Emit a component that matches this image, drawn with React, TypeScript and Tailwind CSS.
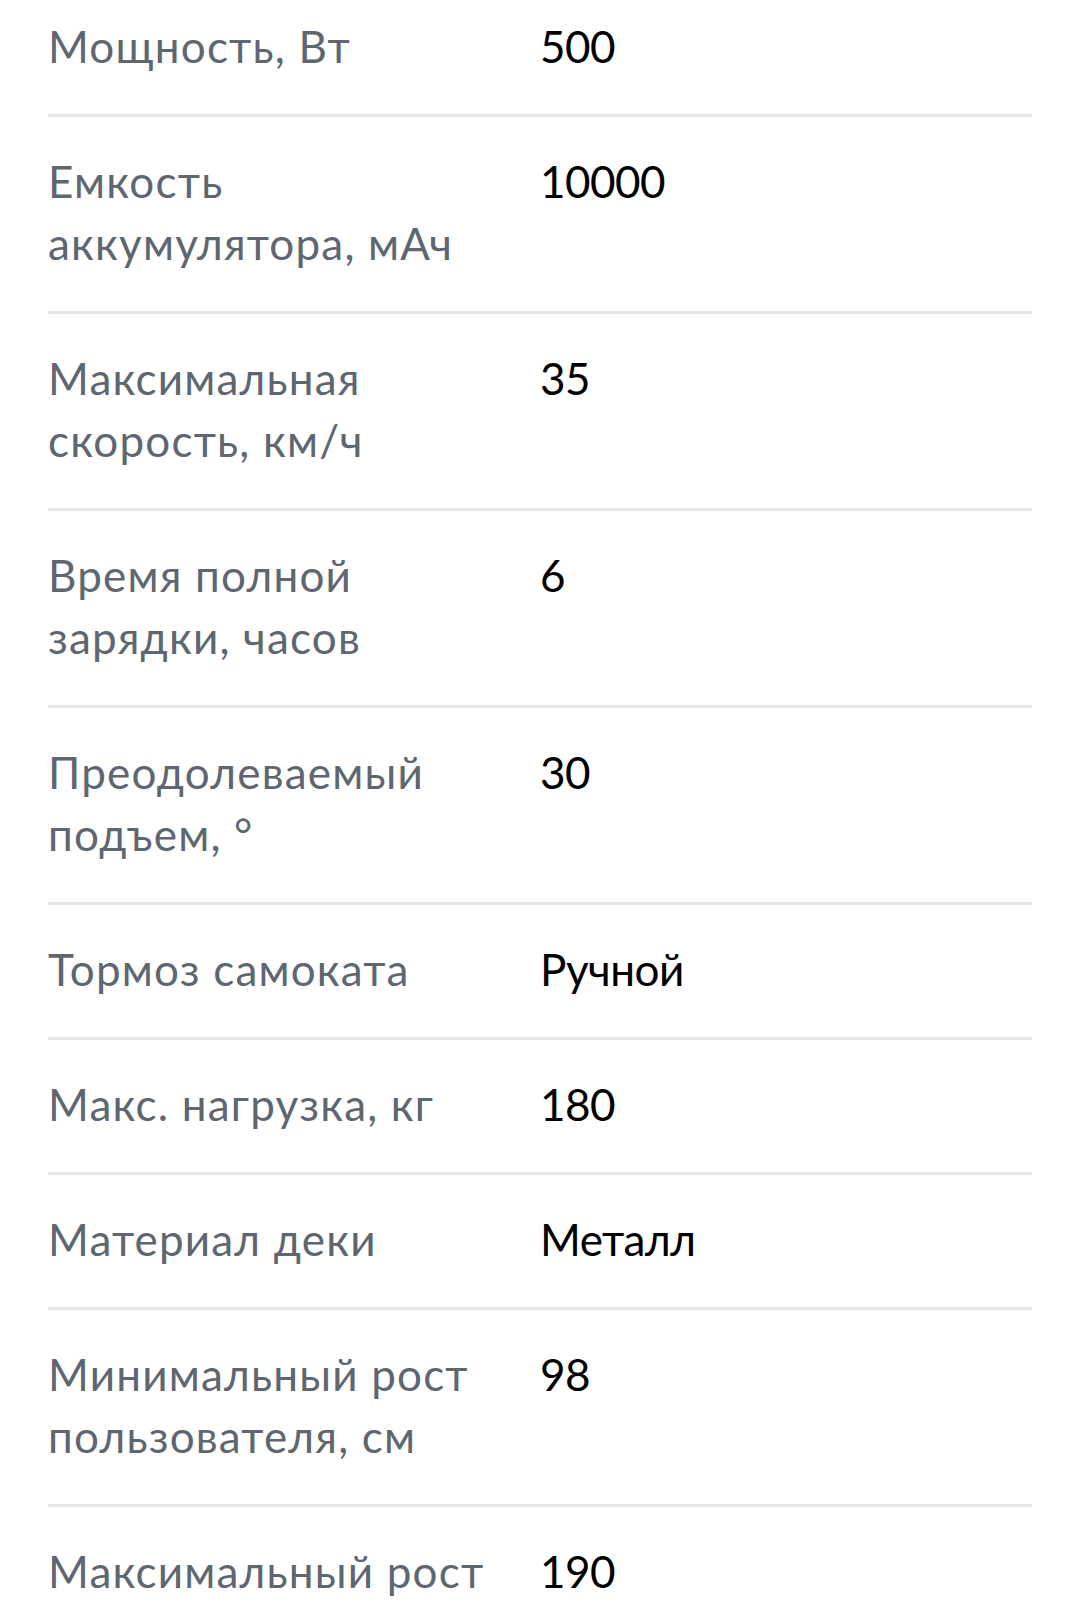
const specs: { label: string[]; value: string }[] = [
  { label: ["Мощность, Вт"], value: "500" },
  { label: ["Емкость", "аккумулятора, мАч"], value: "10000" },
  { label: ["Максимальная", "скорость, км/ч"], value: "35" },
  { label: ["Время полной", "зарядки, часов"], value: "6" },
  { label: ["Преодолеваемый", "подъем, °"], value: "30" },
  { label: ["Тормоз самоката"], value: "Ручной" },
  { label: ["Макс. нагрузка, кг"], value: "180" },
  { label: ["Материал деки"], value: "Металл" },
  { label: ["Минимальный рост", "пользователя, см"], value: "98" },
  { label: ["Максимальный рост"], value: "190" },
];

export default function App() {
  return (
    <main
      className="h-[1617px] overflow-hidden bg-white px-[48px]"
      style={{ fontFamily: "Lato, 'Noto Sans', sans-serif" }}
    >
      <div className="-mt-[18px]">
        {specs.map((row, i) => (
          <div
            key={i}
            className="grid grid-cols-[492px_1fr] border-b-[3px] border-[#e4e7ea] pt-[33px] pb-[37px] text-[44px] leading-[62px]"
          >
            <div className="text-[#5e6670] tracking-[1.2px]">
              {row.label.map((line, j) => (
                <div key={j} className="whitespace-nowrap">
                  {line}
                </div>
              ))}
            </div>
            <div className="text-black tracking-[-0.5px]">{row.value}</div>
          </div>
        ))}
      </div>
    </main>
  );
}
